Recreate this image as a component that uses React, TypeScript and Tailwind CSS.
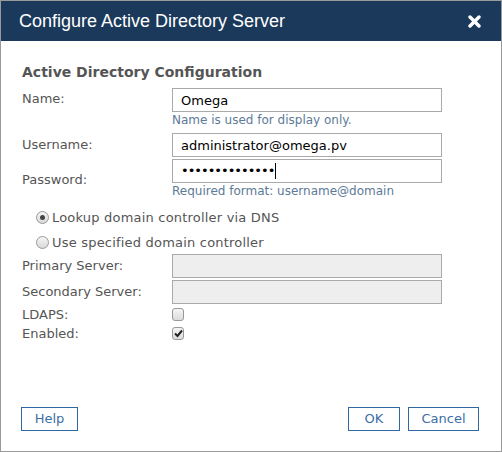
import { useState } from 'react';

const LABEL = 'w-[150px] shrink-0 text-[13px] text-[#555]';
const INPUT = 'w-[270px] h-[24px] border border-[#aaa] px-[8px] text-[13px] text-black outline-none';
const BTN = 'h-[24px] border border-[#2f67a3] bg-white text-[13px] text-[#3b6ea5]';

function Check({ checked }: { checked?: boolean }) {
  return (
    <span className="w-[12px] h-[13px] rounded-[3px] border border-[#999] bg-gradient-to-b from-[#f4f4f4] to-[#dcdcdc] flex items-center justify-center">
      {checked && (
        <svg width="9" height="9" viewBox="0 0 9 9">
          <path d="M1 4.5 L3.5 7 L8 1.5" stroke="#222" strokeWidth="2" fill="none" />
        </svg>
      )}
    </span>
  );
}

function Radio({ checked }: { checked?: boolean }) {
  return (
    <span className="w-[13px] h-[13px] shrink-0 rounded-full border border-[#999] bg-gradient-to-b from-[#f6f6f6] to-[#d8d8d8] flex items-center justify-center">
      {checked && <span className="w-[5px] h-[5px] rounded-full bg-[#444]" />}
    </span>
  );
}

export default function App() {
  const [name, setName] = useState('Omega');
  const [user, setUser] = useState('administrator@omega.pv');

  return (
    <div className="w-[502px] h-[452px] border border-[#9a9a9a] bg-white flex flex-col" style={{ fontFamily: '"DejaVu Sans", Verdana, sans-serif' }}>
      <div className="h-[40px] shrink-0 bg-[#1b3a5b] flex items-center justify-between pl-[18px] pr-[20px]">
        <span className="text-white text-[18px]" style={{ fontFamily: '"Liberation Sans", Arial, sans-serif' }}>
          Configure Active Directory Server
        </span>
        <svg width="13" height="13" viewBox="0 0 13 13">
          <path d="M2 2 L11 11 M11 2 L2 11" stroke="white" strokeWidth="3.4" strokeLinecap="round" />
        </svg>
      </div>

      <div className="flex-1 flex flex-col pl-[21px] pr-[20px]">
        <h2 className="mt-[22px] text-[14px] font-bold text-[#555] leading-[18px]">Active Directory Configuration</h2>

        <div className="flex mt-[7px]">
          <div className={`${LABEL} pt-[1px]`}>Name:</div>
          <div className="flex flex-col">
            <input className={INPUT} value={name} onChange={e => setName(e.target.value)} />
            <span className="text-[12px] text-[#5d7a97] leading-[16px]">Name is used for display only.</span>
          </div>
        </div>

        <div className="flex mt-[5px] items-center">
          <div className={LABEL}>Username:</div>
          <input className={INPUT} value={user} onChange={e => setUser(e.target.value)} />
        </div>

        <div className="flex mt-[2px]">
          <div className={`${LABEL} pt-[11px]`}>Password:</div>
          <div className="flex flex-col">
            <div className={`${INPUT} flex items-center`}>
              <span className="text-[13px] tracking-[-1px]">••••••••••••••</span>
              <span className="w-px h-[16px] bg-black ml-[1px]" />
            </div>
            <span className="text-[12px] text-[#5d7a97] leading-[16px]">Required format: username@domain</span>
          </div>
        </div>

        <div className="flex flex-col pl-[14px] mt-[10px] gap-[8px] text-[13px] tracking-[0.2px] text-[#555]">
          <label className="flex items-center gap-[3px] leading-[17px]">
            <Radio checked />
            <span>Lookup domain controller via DNS</span>
          </label>
          <label className="flex items-center gap-[3px] leading-[17px]">
            <Radio />
            <span>Use specified domain controller</span>
          </label>
        </div>

        <div className="flex items-center mt-[3px]">
          <div className={LABEL}>Primary Server:</div>
          <div className={`${INPUT} bg-[#eee]`} />
        </div>
        <div className="flex items-center mt-[2px]">
          <div className={LABEL}>Secondary Server:</div>
          <div className={`${INPUT} bg-[#eee]`} />
        </div>

        <div className="flex items-center mt-[3px] leading-[15px]">
          <div className={LABEL}>LDAPS:</div>
          <Check />
        </div>
        <div className="flex items-center mt-[4px] leading-[15px]">
          <div className={LABEL}>Enabled:</div>
          <Check checked />
        </div>

        <div className="mt-auto mb-[20px] -ml-[1px] mr-[2px] flex items-center">
          <button className={`${BTN} w-[57px]`}>Help</button>
          <div className="flex-1" />
          <button className={`${BTN} w-[52px] mr-[8px]`}>OK</button>
          <button className={`${BTN} w-[71px]`}>Cancel</button>
        </div>
      </div>
    </div>
  );
}
